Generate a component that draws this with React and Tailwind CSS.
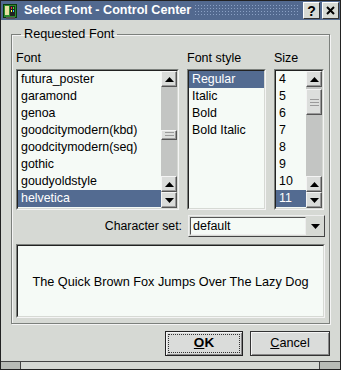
const FONT = { fontFamily: '"Liberation Sans", Arial, sans-serif' }

function ArrowUp() {
  return (
    <svg width="9" height="5" viewBox="0 0 9 5">
      <path d="M0 5 L4.5 0 L9 5 Z" fill="#000" />
    </svg>
  )
}

function ArrowDown() {
  return (
    <svg width="9" height="5" viewBox="0 0 9 5">
      <path d="M0 0 L4.5 5 L9 0 Z" fill="#000" />
    </svg>
  )
}

function ScrollBtn({ down }) {
  return (
    <div className="flex h-[16px] w-[16px] items-center justify-center border border-[#555] border-t-[#f4f4f4] border-l-[#f4f4f4] bg-[#dadcda] shadow-[inset_-1px_-1px_0_#999]">
      {down ? <ArrowDown /> : <ArrowUp />}
    </div>
  )
}

function Thumb({ className }) {
  return (
    <div
      className={
        'flex flex-col items-center justify-center gap-[2px] border border-[#555] border-t-[#f4f4f4] border-l-[#f4f4f4] bg-[#dcdedc] shadow-[inset_-1px_-1px_0_#999] ' +
        className
      }
    >
      <div className="h-px w-[9px] bg-[#9a9a9a]" />
      <div className="h-px w-[9px] bg-[#9a9a9a]" />
      <div className="h-px w-[9px] bg-[#9a9a9a]" />
    </div>
  )
}

function ScrollBar({ before, thumb }) {
  return (
    <div className="flex w-[16px] flex-col">
      <ScrollBtn />
      <div className="flex flex-1 flex-col bg-[#c3c5c3]">
        <div style={{ height: before }} />
        <Thumb className={thumb} />
      </div>
      <ScrollBtn />
      <ScrollBtn down />
    </div>
  )
}

function ListBox({ items, selected, scroll }) {
  return (
    <div className="flex h-[141px] border border-[#7c807c] border-b-[#f4f4f4] border-r-[#f4f4f4]">
      <div className="flex flex-1 border border-[#222] border-b-[#d6d9d4] border-r-[#d6d9d4] bg-[#f5faf6]">
        <div className="flex min-w-0 flex-1 flex-col">
          {items.map((it) => (
            <div
              key={it}
              className={
                'h-[17px] shrink-0 pl-[3px] text-[12.4px] leading-[17px] whitespace-nowrap ' +
                (it === selected ? 'bg-[#536b91] text-white' : 'text-black')
              }
            >
              {it}
            </div>
          ))}
        </div>
        {scroll}
      </div>
    </div>
  )
}

export default function App() {
  const fonts = [
    'futura_poster',
    'garamond',
    'genoa',
    'goodcitymodern(kbd)',
    'goodcitymodern(seq)',
    'gothic',
    'goudyoldstyle',
    'helvetica',
  ]
  const styles = ['Regular', 'Italic', 'Bold', 'Bold Italic']
  const sizes = ['4', '5', '6', '7', '8', '9', '10', '11']

  return (
    <div
      className="flex h-[370px] w-[341px] flex-col border border-[#222] bg-[#d6d9d4] text-black"
      style={FONT}
    >
      {/* title bar */}
      <div className="flex h-[19px] shrink-0 items-center bg-[#52698f] pl-[2px] pr-[1px]">
        <svg width="16" height="16" viewBox="0 0 16 16" className="shrink-0">
          <rect x="0.5" y="1.5" width="13" height="13" fill="#2f8a2f" stroke="#0a3a0a" />
          <rect x="2" y="3" width="4" height="9" fill="#e8e0a0" />
          <rect x="7" y="3" width="5" height="10" fill="#222" />
          <rect x="8" y="4" width="1" height="2" fill="#f33" />
          <rect x="10" y="4" width="1" height="2" fill="#3f3" />
          <rect x="8" y="7" width="1" height="2" fill="#ff3" />
          <rect x="10" y="7" width="1" height="2" fill="#3cf" />
          <rect x="3" y="14" width="9" height="2" fill="#555" />
        </svg>
        <div className="ml-[5px] shrink-0 text-[12.6px] leading-[19px] font-bold text-white">
          Select Font - Control Center
        </div>
        <div className="mx-[3px] h-[13px] flex-1 bg-[radial-gradient(#8aa0c4_0.7px,transparent_0.8px)] bg-[length:3px_3px]" />
        <div className="flex gap-[2px]">
          <div className="flex h-[17px] w-[17px] items-center justify-center border border-[#333] border-t-white border-l-white bg-[#d6d9d4] text-[14px] leading-none font-bold">
            ?
          </div>
          <div className="flex h-[17px] w-[17px] items-center justify-center border border-[#333] border-t-white border-l-white bg-[#d6d9d4]">
            <svg width="9" height="9" viewBox="0 0 9 9">
              <path d="M1 1 L8 8 M8 1 L1 8" stroke="#000" strokeWidth="2" />
            </svg>
          </div>
        </div>
      </div>

      {/* body */}
      <div className="flex flex-1 flex-col border-x-[3px] border-[#d6d9d4] px-[7px] pt-[7px]">
        <fieldset className="border border-[#7c807c] px-[4px] pb-[5px] shadow-[1px_1px_0_#f4f4f4,inset_1px_1px_0_#f4f4f4]">
          <legend className="ml-[5px] px-[3px] text-[12.7px] leading-[15px]">Requested Font</legend>
          <div className="mt-[9px] flex gap-[8px] text-[12.5px] leading-[14px]">
            <div className="flex w-[163px] flex-col">
              <div className="pb-[4px]">Font</div>
              <ListBox
                items={fonts}
                selected="helvetica"
                scroll={<ScrollBar before={43} thumb="h-[10px] gap-0" />}
              />
            </div>
            <div className="flex w-[79px] flex-col">
              <div className="pb-[4px]">Font style</div>
              <ListBox items={styles} selected="Regular" />
            </div>
            <div className="flex w-[50px] flex-col">
              <div className="pb-[4px]">Size</div>
              <ListBox
                items={sizes}
                selected="11"
                scroll={<ScrollBar before={2} thumb="h-[26px]" />}
              />
            </div>
          </div>

          <div className="mt-[5px] flex items-center justify-end gap-[6px]">
            <div className="text-[12.3px]">Character set:</div>
            <div className="flex h-[22px] w-[137px] border border-[#444] border-t-[#eee] border-l-[#eee] bg-[#d6d9d4]">
              <div className="m-[1px] flex flex-1 items-center border border-[#555] border-b-[#eee] border-r-[#eee] bg-[#f5faf6] pl-[2px] text-[12.5px]">
                default
              </div>
              <div className="flex w-[17px] items-center justify-center">
                <ArrowDown />
              </div>
            </div>
          </div>

          <div className="mt-[7px] flex h-[74px] items-center justify-center border border-[#7c807c] border-b-[#f4f4f4] border-r-[#f4f4f4]">
            <div className="flex h-full w-full items-center justify-center border border-[#222] border-b-[#d6d9d4] border-r-[#d6d9d4] bg-[#f5faf6] pt-[3px] text-[12.7px]">
              The Quick Brown Fox Jumps Over The Lazy Dog
            </div>
          </div>
        </fieldset>

        <div className="mt-[7px] flex justify-end gap-[7px]">
          <div className="flex h-[25px] w-[78px] items-center justify-center border border-[#222] bg-[#dadcda] p-[2px] shadow-[inset_1px_1px_0_#f4f4f4,inset_-1px_-1px_0_#888]">
            <div className="flex h-full w-full items-center justify-center border border-dotted border-[#333] text-[13.5px] font-bold">
              <span className="underline">O</span>K
            </div>
          </div>
          <div className="flex h-[25px] w-[80px] items-center justify-center border border-[#333] bg-[#dadcda] text-[12.7px] shadow-[inset_1px_1px_0_#f4f4f4,inset_-1px_-1px_0_#888]">
            <span className="underline">C</span>ancel
          </div>
        </div>
      </div>

      {/* bottom frame */}
      <div className="flex h-[8px] shrink-0 border-t border-[#444]">
        <div className="w-[20px] border-r border-[#444] bg-[#b8bbb6]" />
        <div className="flex-1 border-r border-[#444] bg-[#d6d9d4]" />
        <div className="w-[20px] bg-[#b8bbb6]" />
      </div>
    </div>
  )
}
